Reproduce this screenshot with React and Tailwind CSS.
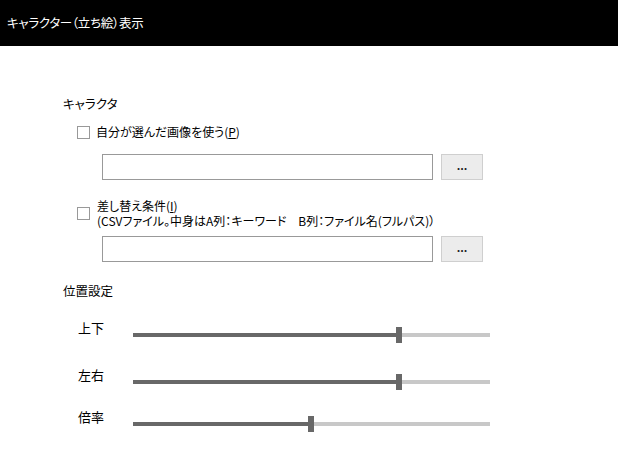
import React from 'react';

const font = { fontFamily: '"Noto Sans CJK JP", "Noto Sans", sans-serif' };

const Checkbox = () => (
  <span className="block w-[13px] h-[13px] border border-[#999] bg-white flex-none" />
);

const FileRow = ({ className }) => (
  <div className={`flex ml-[102px] ${className}`}>
    <div className="w-[331px] h-[26px] border border-[#999] bg-white" />
    <button className="ml-[8px] w-[42px] h-[26px] border border-[#cfcfcf] bg-[#ececec] text-[11px] font-bold leading-none text-[#222] pb-[4px]">
      ...
    </button>
  </div>
);

const Slider = ({ label, filled, className }) => (
  <div className={`flex items-start ${className}`}>
    <div className="ml-[78px] w-[55px] leading-[18px] text-[13px]">{label}</div>
    <div className="mt-[8px] w-[357px] h-[16px] flex items-center">
      <div className="h-[4px] bg-[#686868] flex-none" style={{ width: filled }} />
      <div className="w-[6px] h-[16px] bg-[#686868] flex-none" />
      <div className="h-[4px] bg-[#c8c8c8] flex-1" />
    </div>
  </div>
);

const App = () => {
  return (
    <div
      className="w-[618px] h-[464px] bg-white text-black text-[12px] overflow-hidden [font-feature-settings:'palt']"
      style={font}
    >
      <header className="h-[46px] bg-black text-white flex items-center pl-[7px] text-[12.5px] tracking-[-0.3px]">
        キャラクター（立ち絵）表示
      </header>

      <div className="ml-[63px] mt-[49px] leading-[18px] text-[12.5px]">キャラクタ</div>

      <div className="flex items-center ml-[77px] mt-[10px] h-[18px]">
        <Checkbox />
        <span className="ml-[6px] leading-[18px]">
          自分が選んだ画像を使う(<u>P</u>)
        </span>
      </div>

      <FileRow className="mt-[13px]" />

      <div className="flex items-center ml-[77px] mt-[18px]">
        <Checkbox />
        <div className="ml-[7px] leading-[15px]">
          <div>差し替え条件(<u>I</u>)</div>
          <div>(CSVファイル。中身はA列：キーワード　B列：ファイル名(フルパス)）</div>
        </div>
      </div>

      <FileRow className="mt-[8px]" />

      <div className="ml-[63px] mt-[20px] leading-[18px] text-[12.5px]">位置設定</div>

      <Slider label="上下" filled="263px" className="mt-[19px]" />
      <Slider label="左右" filled="263px" className="mt-[23px]" />
      <Slider label="倍率" filled="175px" className="mt-[18px]" />
    </div>
  );
};

export default App;
